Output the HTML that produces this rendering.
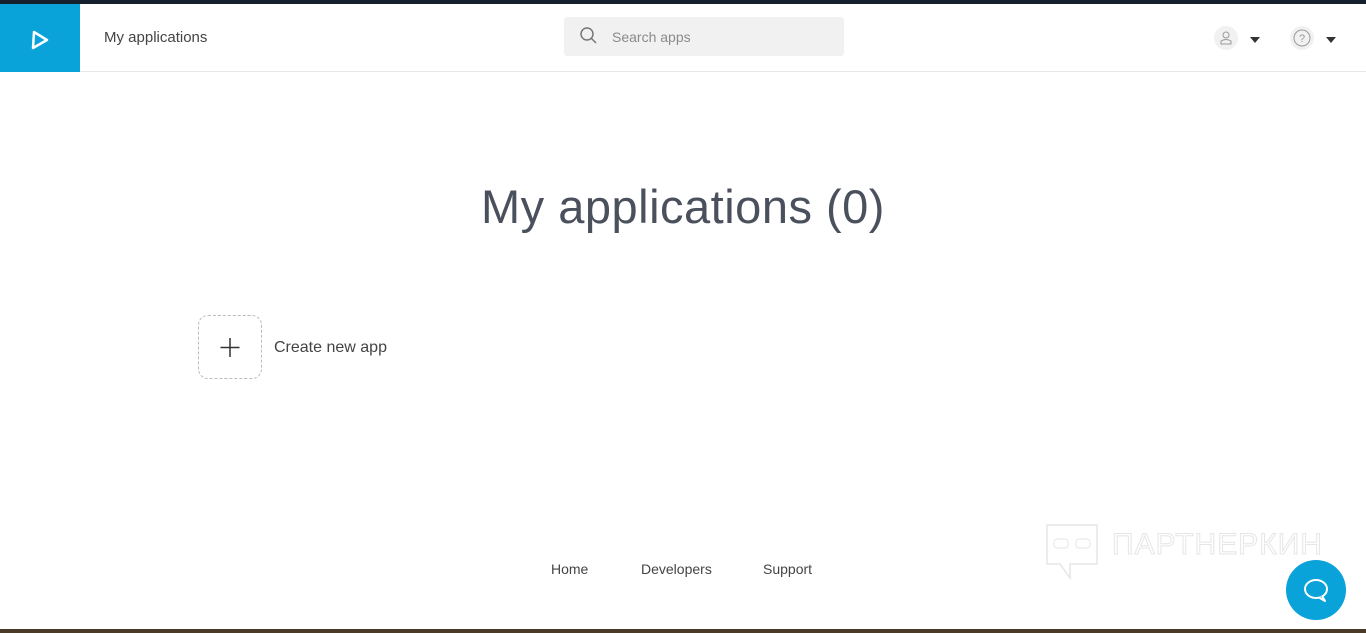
<!DOCTYPE html>
<html><head><meta charset="utf-8"><style>
body{margin:0;width:1366px;height:633px;overflow:hidden;background:#fff;font-family:"Liberation Sans",sans-serif;position:relative}
.top{position:absolute;left:0;top:0;width:1366px;height:4px;background:#14202c}
.hdr{position:absolute;left:0;top:4px;width:1366px;height:67px;border-bottom:1px solid #e8e8e8}
.logo{position:absolute;left:0;top:0;width:80px;height:68px;background:#0aa3d9}
.t{position:absolute;left:104px;top:25px;font-size:15px;color:#444}
.search{position:absolute;left:564px;top:13px;width:280px;height:39px;background:#f1f1f2;border-radius:3px}
.search span{position:absolute;left:48px;top:12px;font-size:14px;color:#8a8a8a}
.ic{position:absolute;top:26px;width:24px;height:24px;border-radius:50%;background:#f1f1f2}
.tri{position:absolute;top:37px;width:0;height:0;border-left:5px solid transparent;border-right:5px solid transparent;border-top:6px solid #333}
h1{position:absolute;left:0;width:1366px;top:179px;margin:0;text-align:center;font-weight:normal;font-size:47px;color:#4a505c;letter-spacing:0.5px}
.box{position:absolute;left:198px;top:315px;width:62px;height:62px;border:1px dashed #bbb;border-radius:10px}
.cr{position:absolute;left:274px;top:339px;font-size:16px;color:#444}
.f{position:absolute;top:561px;font-size:14px;color:#444}
.chat{position:absolute;left:1286px;top:560px;width:60px;height:60px;border-radius:50%;background:#0aa3d9}
.bot{position:absolute;left:0;top:629px;width:1366px;height:4px;background:#4a3a28}
.wm{position:absolute;left:1112px;top:528px;font-size:30px;color:#fff;-webkit-text-stroke:1px #e6e6e6;letter-spacing:1px}
</style></head><body>
<div class="top"></div>
<div class="hdr">
<div class="logo"><svg width="80" height="68"><path d="M34 28 L47 36 L33 44 Z" fill="none" stroke="#fff" stroke-width="2.5" stroke-linejoin="round"/></svg></div>
<div class="t">My applications</div>
<div class="search"><svg width="30" height="30" style="position:absolute;left:12px;top:6px"><circle cx="11" cy="11" r="6" fill="none" stroke="#777" stroke-width="1.5"/><path d="M15.5 15.5 L20 20" stroke="#777" stroke-width="1.5"/></svg><span>Search apps</span></div>
</div>
<div class="ic" style="left:1214px"><svg width="24" height="24"><circle cx="12" cy="9" r="3" fill="none" stroke="#999"/><path d="M7 18 V15 Q12 12 17 15 V18 Z" fill="none" stroke="#999"/></svg></div>
<div class="tri" style="left:1250px"></div>
<div class="ic" style="left:1290px"><svg width="24" height="24"><circle cx="12" cy="12" r="8" fill="none" stroke="#999"/><text x="12" y="16" text-anchor="middle" font-size="11" fill="#999" font-family="Liberation Sans">?</text></svg></div>
<div class="tri" style="left:1326px"></div>
<svg style="position:absolute;left:1044px;top:522px" width="56" height="60"><path d="M3 3 H53 V42 H26 L26 56 L16 42 H3 Z" fill="none" stroke="#e6e6e6" stroke-width="1.5"/><rect x="10" y="17" width="14" height="9" rx="3" fill="none" stroke="#e6e6e6"/><rect x="32" y="17" width="14" height="9" rx="3" fill="none" stroke="#e6e6e6"/></svg>
<div class="wm">ПАРТНЕРКИН</div>
<h1>My applications (0)</h1>
<div class="box"><svg width="62" height="62"><path d="M31 22 V41 M21.5 31.5 H40.5" stroke="#333" stroke-width="1.5"/></svg></div>
<div class="cr">Create new app</div>
<div class="f" style="left:551px">Home</div>
<div class="f" style="left:641px">Developers</div>
<div class="f" style="left:763px">Support</div>
<div class="chat"><svg width="60" height="60"><ellipse cx="30" cy="29" rx="11" ry="9" fill="none" stroke="#fff" stroke-width="2"/><path d="M36 36 L39 41 L33 37.5" fill="#0aa3d9" stroke="#fff" stroke-width="2" stroke-linejoin="round"/></svg></div>
<div class="bot"></div>
</body></html>
